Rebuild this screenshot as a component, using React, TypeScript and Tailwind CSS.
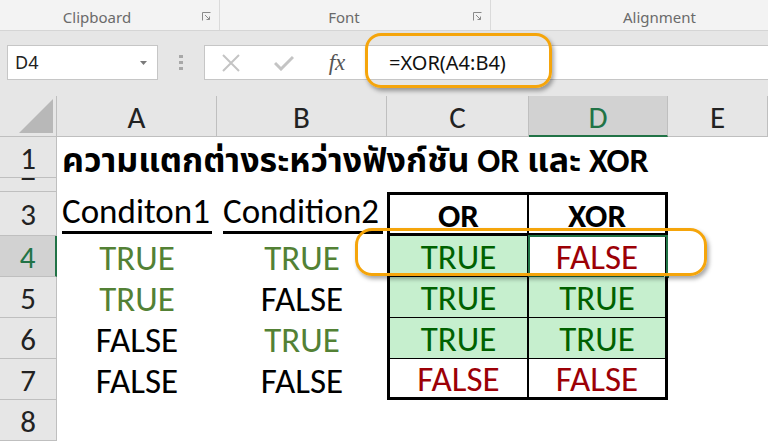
import React from "react";

const CELL = "font-['Carlito','Lato','Noto_Sans_Thai',sans-serif]";
const UI = "font-['Noto_Sans','Open_Sans',sans-serif]";

function RowHead({ n, h, active }: { n: string; h: string; active?: boolean }) {
  return (
    <div
      className={`w-[57px] shrink-0 ${h} flex items-center justify-center text-[31px] leading-none pt-[2px] ${
        active
          ? "bg-[#d2d2d2] text-[#217346] border-r-2 border-r-[#217346]"
          : "bg-[#e6e6e6] text-[#222] border-r border-r-[#bfbfbf]"
      } border-b border-b-[#bfbfbf]`}
    >
      {n}
    </div>
  );
}

function ColHead({ l, w, active }: { l: string; w: string; active?: boolean }) {
  return (
    <div
      className={`${w} h-full flex items-center justify-center text-[31px] leading-none pt-[3px] ${
        active
          ? "bg-[#d2d2d2] text-[#217346] border-b-2 border-b-[#217346]"
          : "bg-[#e6e6e6] text-[#222] border-b border-b-[#bfbfbf]"
      } border-r border-r-[#bfbfbf]`}
    >
      {l}
    </div>
  );
}

function Val({ v, kind }: { v: string; kind: "g" | "b" }) {
  return (
    <span className={kind === "g" ? "text-[#538135]" : "text-black"}>{v}</span>
  );
}

type TC = { v: string; fill: boolean };

function TableCell({ c, left, last, sel }: { c: TC; left: boolean; last: boolean; sel?: boolean }) {
  const borders = left
    ? `border-l-[3px] border-r-2 ${last ? "border-b-[3px]" : "border-b"}`
    : `border-r-[3px] ${last ? "border-b-[3px]" : "border-b"}`;
  return (
    <div
      className={`${left ? "w-[142px]" : "w-[139px]"} h-full relative flex items-center justify-center pt-[3px] border-black ${borders} ${
        c.fill ? "bg-[#c6efce] text-[#006100]" : "bg-white text-[#9c0006]"
      }`}
    >
      {c.v}
      {sel && (
        <div className="absolute -left-[1px] -top-[1px] -right-[3px] -bottom-[1px] border-2 border-[#217346]">
          <div className="absolute -right-[4px] -bottom-[4px] w-[6px] h-[6px] bg-[#217346] border border-white" />
        </div>
      )}
    </div>
  );
}

export default function App() {
  const rows: { n: string; a: [string, "g" | "b"]; b: [string, "g" | "b"]; c: TC; d: TC }[] = [
    { n: "4", a: ["TRUE", "g"], b: ["TRUE", "g"], c: { v: "TRUE", fill: true }, d: { v: "FALSE", fill: false } },
    { n: "5", a: ["TRUE", "g"], b: ["FALSE", "b"], c: { v: "TRUE", fill: true }, d: { v: "TRUE", fill: true } },
    { n: "6", a: ["FALSE", "b"], b: ["TRUE", "g"], c: { v: "TRUE", fill: true }, d: { v: "TRUE", fill: true } },
    { n: "7", a: ["FALSE", "b"], b: ["FALSE", "b"], c: { v: "FALSE", fill: false }, d: { v: "FALSE", fill: false } },
  ];

  return (
    <div className="w-[768px] h-[442px] overflow-hidden bg-white relative">
      {/* Ribbon group labels */}
      <div className={`h-[31px] bg-[#f3f3f3] border-b border-[#d5d5d5] flex ${UI} text-[15px] text-[#6a6a6a]`}>
        <div className="w-[220px] flex items-center border-r border-[#dadada] pt-[5px]">
          <div className="flex-1 text-center pr-[8px]">Clipboard</div>
          <svg width="9" height="9" viewBox="0 0 9 9" className="mr-[8px] -mt-[2px]">
            <path d="M0.5 8.5 V0.5 H8.5" fill="none" stroke="#8a8a8a" strokeWidth="1" />
            <path d="M3 3 L7.5 7.5 M7.5 4.5 V7.5 H4.5" fill="none" stroke="#8a8a8a" strokeWidth="1" />
          </svg>
        </div>
        <div className="w-[271px] flex items-center border-r border-[#dadada] pt-[5px]">
          <div className="flex-1 text-center pr-[5px]">Font</div>
          <svg width="9" height="9" viewBox="0 0 9 9" className="mr-[8px] -mt-[2px]">
            <path d="M0.5 8.5 V0.5 H8.5" fill="none" stroke="#8a8a8a" strokeWidth="1" />
            <path d="M3 3 L7.5 7.5 M7.5 4.5 V7.5 H4.5" fill="none" stroke="#8a8a8a" strokeWidth="1" />
          </svg>
        </div>
        <div className="flex-1 flex items-center pl-[132px] pt-[5px]">Alignment</div>
      </div>

      {/* Formula bar */}
      <div className="h-[65px] bg-[#e6e6e6] flex items-center pl-[7px] pb-[2px]">
        <div className={`w-[151px] h-[35px] bg-white border border-[#c6c6c6] flex items-center pl-[7px] pr-[10px] ${UI} text-[18px] text-[#222]`}>
          <span className="flex-1">D4</span>
          <svg width="7" height="4" viewBox="0 0 7 4">
            <path d="M0 0 H7 L3.5 4 Z" fill="#7a7a7a" />
          </svg>
        </div>
        <div className="w-[46px] flex flex-col items-center gap-[3px]">
          <div className="w-[4px] h-[3px] bg-[#a8a8a8]" />
          <div className="w-[4px] h-[3px] bg-[#a8a8a8]" />
          <div className="w-[4px] h-[3px] bg-[#a8a8a8]" />
        </div>
        <div className="flex-1 h-[35px] bg-white border border-[#c6c6c6] border-r-0 flex items-center">
          <div className="w-[51px] flex justify-center">
            <svg width="18" height="18" viewBox="0 0 18 18">
              <path d="M1 1 L17 17 M17 1 L1 17" stroke="#c4c4c4" strokeWidth="2" />
            </svg>
          </div>
          <div className="w-[56px] flex justify-center">
            <svg width="20" height="16" viewBox="0 0 20 16">
              <path d="M1 8 L7 14 L19 2" fill="none" stroke="#c4c4c4" strokeWidth="3" />
            </svg>
          </div>
          <div className="w-[50px] flex justify-center font-['Liberation_Serif',serif] italic text-[23px] text-[#555] leading-none">
            fx
          </div>
          <div className={`pl-[27px] ${UI} text-[20px] text-[#111]`}>=XOR(A4:B4)</div>
        </div>
      </div>

      {/* Sheet */}
      <div className={`${CELL} flex flex-col`}>
        {/* Column headers */}
        <div className="h-[41px] flex">
          <div className="w-[57px] h-full bg-[#e6e6e6] border-r border-b border-[#bfbfbf] flex items-end justify-end pr-[3px] pb-[3px]">
            <svg width="34" height="34" viewBox="0 0 34 34">
              <path d="M34 0 V34 H0 Z" fill="#b8b8b8" />
            </svg>
          </div>
          <ColHead l="A" w="w-[160px]" />
          <ColHead l="B" w="w-[170px]" />
          <ColHead l="C" w="w-[142px]" />
          <ColHead l="D" w="w-[139px]" active />
          <ColHead l="E" w="flex-1" />
        </div>

        {/* Row 1 */}
        <div className="h-[41px] flex">
          <RowHead n="1" h="h-full" />
          <div className="pl-[5px] flex items-center pt-[6px] text-[34px] leading-none font-bold text-black whitespace-nowrap">
            ความแตกต่างระหว่างฟังก์ชัน OR และ XOR
          </div>
        </div>

        {/* Row 2 (nearly hidden) */}
        <div className="h-[14px] flex">
          <div className="w-[57px] h-full bg-[#e6e6e6] border-r border-b border-[#bfbfbf] relative overflow-hidden">
            <span className="absolute left-0 right-0 text-center bottom-[6px] text-[31px] leading-none text-[#222]">2</span>
          </div>
        </div>

        {/* Row 3 */}
        <div className="h-[44px] flex">
          <RowHead n="3" h="h-full" />
          <div className="w-[160px] h-full px-[5px]">
            <div className="h-[42px] border-b-[3px] border-black flex items-end text-[35px] leading-none pb-[2px]">Conditon1</div>
          </div>
          <div className="w-[170px] h-full pl-[6px] pr-[4px]">
            <div className="h-[42px] border-b-[3px] border-black flex items-end text-[35px] leading-none pb-[2px]">Condition2</div>
          </div>
          <div className="w-[142px] h-full border-[3px] border-r-2 border-black border-b-[3px] flex items-center justify-center text-[33px] leading-none font-bold pt-[4px]">
            OR
          </div>
          <div className="w-[139px] h-full border-t-[3px] border-r-[3px] border-b-[3px] border-black flex items-center justify-center text-[33px] leading-none font-bold pt-[4px]">
            XOR
          </div>
        </div>

        {rows.map((r, i) => (
          <div key={r.n} className="h-[41px] flex text-[35px] leading-none">
            <RowHead n={r.n} h="h-full" active={r.n === "4"} />
            <div className="w-[160px] h-full flex items-center justify-center pt-[3px]">
              <Val v={r.a[0]} kind={r.a[1]} />
            </div>
            <div className="w-[170px] h-full flex items-center justify-center pt-[3px]">
              <Val v={r.b[0]} kind={r.b[1]} />
            </div>
            <TableCell c={r.c} left last={i === 3} />
            <TableCell c={r.d} left={false} last={i === 3} sel={r.n === "4"} />
          </div>
        ))}

        <div className="h-[41px] flex">
          <RowHead n="8" h="h-full" />
        </div>
      </div>

      {/* Orange highlight rings */}
      <div className="absolute left-[365px] top-[33px] w-[187px] h-[55px] rounded-[16px] border-[3px] border-[#f5a50b] shadow-[2px_3px_4px_rgba(0,0,0,0.35)]" />
      <div className="absolute left-[355px] top-[228px] w-[352px] h-[48px] rounded-[17px] border-[3px] border-[#f5a50b] shadow-[2px_3px_4px_rgba(0,0,0,0.35)]" />
    </div>
  );
}
